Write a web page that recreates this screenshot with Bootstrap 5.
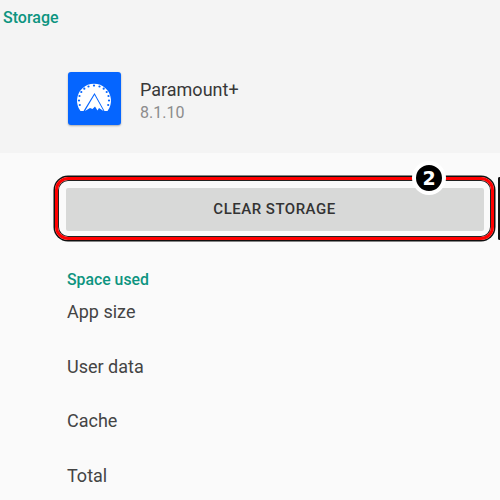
<!DOCTYPE html>
<html lang="en">
<head>
<meta charset="utf-8">
<title>Storage</title>
<link href="https://cdn.jsdelivr.net/npm/bootstrap@5.3.0/dist/css/bootstrap.min.css" rel="stylesheet">
<style>
html,body{width:500px;height:500px;overflow:hidden;}
body{background:#fafafa;font-family:Roboto,"Liberation Sans",sans-serif;color:#3a3a3a;}
.hdr{background:#f4f4f4;height:153px;padding-top:10px;}
.ttl{color:#0d9480;font-size:16px;font-weight:500;line-height:16px;padding-left:3px;}
.appline{margin-top:46px;padding-left:68px;gap:19px;}
.appico{width:53px;height:53px;border-radius:3px;background:#0565ff;box-shadow:0 1px 2px rgba(0,0,0,.3);flex:none;}
.appname{font-size:18px;line-height:22px;color:#383838;margin-top:7px;}
.appver{font-size:16px;line-height:22px;color:#8c8c8c;margin-top:1px;}
.ringrow{margin-top:24px;padding-left:55px;gap:4px;width:500px;}
.ring{width:439px;height:63px;flex:none;border:3.5px solid #f00;border-radius:13px;box-shadow:0 0 0 1.5px #111,inset 0 0 0 1px #222;padding:7.5px 7.5px;}
.clearbtn{height:43px;width:100%;background:#d8d9d8;border:0;border-radius:2px;color:#333;font-size:15px;font-weight:500;letter-spacing:.5px;line-height:43px;padding:0;text-align:center;}
.ring2{flex:1;height:63px;border-radius:13px 0 0 13px;border:2px solid #111;border-right:0;}
.step{position:absolute;left:412px;top:161px;width:34px;height:34px;border-radius:50%;background:#000;border:4px solid #fff;color:#fff;font-family:"DejaVu Sans",sans-serif;font-weight:700;font-size:19px;line-height:26px;text-align:center;}
.sec{color:#0d9480;font-size:15.8px;font-weight:500;line-height:16px;margin-top:32px;padding-left:67px;}
.lst{padding-left:67px;margin-top:10px;}
.lst div{font-size:18px;line-height:24px;height:54.6px;padding-top:2px;color:#444;}
</style>
</head>
<body class="position-relative">
<div class="hdr">
  <div class="ttl">Storage</div>
  <div class="appline d-flex">
    <div class="appico">
      <svg class="d-block" width="53" height="53" viewBox="0 0 53 53">
        <path d="M12.500 39 A17 17 0 1 1 39.500 39 L36.500 39 L26.500 21 L15.500 39 Z" fill="#fff"/>
        <path d="M17 39 L26.500 23 L35.500 39 L31 36 L29.500 38.500 L27 34.500 L24.500 37 L22 36 Z" fill="#fff"/>
        <g fill="#0565ff">
          <circle cx="11.800" cy="33" r="1.100"/><circle cx="11" cy="28.500" r="1.100"/><circle cx="11.500" cy="24" r="1.100"/><circle cx="13.300" cy="20" r="1.100"/><circle cx="16.300" cy="16.700" r="1.100"/><circle cx="20.500" cy="14.500" r="1.100"/><circle cx="26" cy="13.600" r="1.100"/><circle cx="31.500" cy="14.500" r="1.100"/><circle cx="35.700" cy="16.700" r="1.100"/><circle cx="38.700" cy="20" r="1.100"/><circle cx="40.500" cy="24" r="1.100"/><circle cx="41" cy="28.500" r="1.100"/><circle cx="40.200" cy="33" r="1.100"/>
        </g>
      </svg>
    </div>
    <div>
      <div class="appname">Paramount+</div>
      <div class="appver">8.1.10</div>
    </div>
  </div>
</div>
<div class="ringrow d-flex">
  <div class="ring"><button type="button" class="btn clearbtn">CLEAR STORAGE</button></div>
  <div class="ring2"></div>
</div>
<div class="step">2</div>
<div class="sec">Space used</div>
<div class="lst">
  <div>App size</div>
  <div>User data</div>
  <div>Cache</div>
  <div>Total</div>
</div>
</body>
</html>
